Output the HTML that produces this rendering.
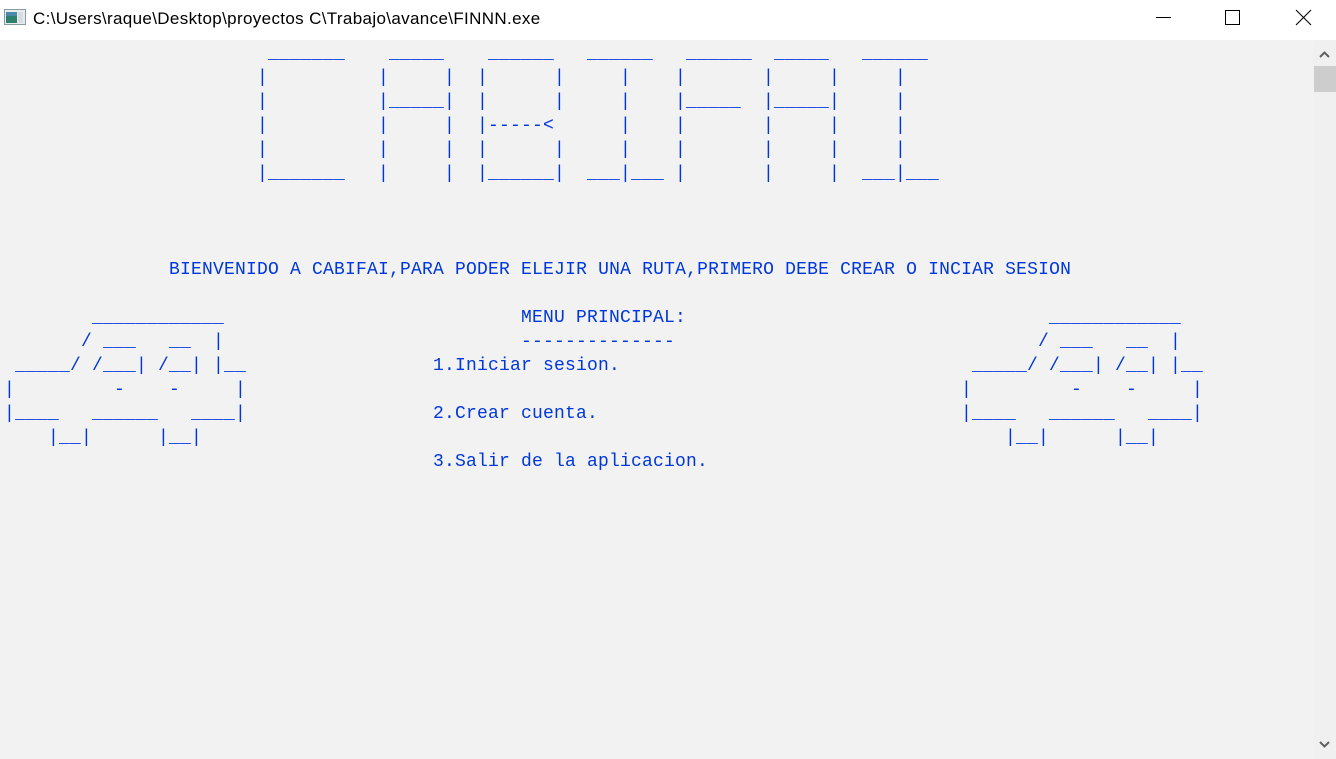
<!DOCTYPE html>
<html><head><meta charset="utf-8"><style>
html,body{margin:0;padding:0;}
body{width:1336px;height:759px;background:#f2f2f2;position:relative;overflow:hidden;}
#tb{position:absolute;left:0;top:0;width:1336px;height:40px;background:#fff;}
#title{position:absolute;left:33px;top:9px;font:17px "Liberation Sans",sans-serif;color:#000;white-space:nowrap;letter-spacing:0.35px;}
#con{position:absolute;left:0;top:42px;width:1313px;height:717px;}
.t{position:absolute;left:calc(4px + var(--c) * 11px);top:calc(var(--r) * 24px);height:24px;line-height:24px;font-family:"Liberation Mono",monospace;font-size:18px;letter-spacing:0.2px;color:#0037da;white-space:pre;}
#sb{position:absolute;left:1313px;top:40px;width:23px;height:719px;background:#f0f0f0;}
</style></head><body>
<div id="tb">
  <svg style="position:absolute;left:4px;top:9px" width="22" height="16" viewBox="0 0 22 16">
    <rect x="0.5" y="0.5" width="21" height="15" fill="#e8ecee" stroke="#8a9aa3"/>
    <rect x="2" y="3" width="11" height="11" fill="#2f7f6e"/>
    <rect x="2" y="3" width="11" height="4" fill="#4a8aa8"/>
    <rect x="14" y="3" width="5" height="11" fill="#d6dcdf"/>
  </svg>
  <div id="title">C:\Users\raque\Desktop\proyectos C\Trabajo\avance\FINNN.exe</div>
  <svg style="position:absolute;left:1150px;top:5px" width="180" height="30" viewBox="1150 5 180 30">
    <line x1="1156" y1="17.5" x2="1171" y2="17.5" stroke="#000" stroke-width="1"/>
    <rect x="1225.5" y="10.5" width="14" height="14" fill="none" stroke="#000" stroke-width="1"/>
    <line x1="1296" y1="10" x2="1311" y2="25" stroke="#000" stroke-width="1.1"/>
    <line x1="1311" y1="10" x2="1296" y2="25" stroke="#000" stroke-width="1.1"/>
  </svg>
</div>
<div id="con">
<span class="t" style="--c:24;--r:0">_______</span>
<span class="t" style="--c:35;--r:0">_____</span>
<span class="t" style="--c:44;--r:0">______</span>
<span class="t" style="--c:53;--r:0">______</span>
<span class="t" style="--c:62;--r:0">______</span>
<span class="t" style="--c:70;--r:0">_____</span>
<span class="t" style="--c:78;--r:0">______</span>
<span class="t" style="--c:23;--r:1">|</span><span class="t" style="--c:34;--r:1">|</span><span class="t" style="--c:40;--r:1">|</span><span class="t" style="--c:43;--r:1">|</span><span class="t" style="--c:50;--r:1">|</span><span class="t" style="--c:56;--r:1">|</span><span class="t" style="--c:61;--r:1">|</span><span class="t" style="--c:69;--r:1">|</span><span class="t" style="--c:75;--r:1">|</span><span class="t" style="--c:81;--r:1">|</span>
<span class="t" style="--c:23;--r:2">|</span><span class="t" style="--c:34;--r:2">|_____|</span><span class="t" style="--c:43;--r:2">|</span><span class="t" style="--c:50;--r:2">|</span><span class="t" style="--c:56;--r:2">|</span><span class="t" style="--c:61;--r:2">|_____</span><span class="t" style="--c:69;--r:2">|_____|</span><span class="t" style="--c:81;--r:2">|</span>
<span class="t" style="--c:23;--r:3">|</span><span class="t" style="--c:34;--r:3">|</span><span class="t" style="--c:40;--r:3">|</span><span class="t" style="--c:43;--r:3">|-----&lt;</span><span class="t" style="--c:56;--r:3">|</span><span class="t" style="--c:61;--r:3">|</span><span class="t" style="--c:69;--r:3">|</span><span class="t" style="--c:75;--r:3">|</span><span class="t" style="--c:81;--r:3">|</span>
<span class="t" style="--c:23;--r:4">|</span><span class="t" style="--c:34;--r:4">|</span><span class="t" style="--c:40;--r:4">|</span><span class="t" style="--c:43;--r:4">|</span><span class="t" style="--c:50;--r:4">|</span><span class="t" style="--c:56;--r:4">|</span><span class="t" style="--c:61;--r:4">|</span><span class="t" style="--c:69;--r:4">|</span><span class="t" style="--c:75;--r:4">|</span><span class="t" style="--c:81;--r:4">|</span>
<span class="t" style="--c:23;--r:5">|_______</span><span class="t" style="--c:34;--r:5">|</span><span class="t" style="--c:40;--r:5">|</span><span class="t" style="--c:43;--r:5">|______|</span><span class="t" style="--c:53;--r:5">___|___</span><span class="t" style="--c:61;--r:5">|</span><span class="t" style="--c:69;--r:5">|</span><span class="t" style="--c:75;--r:5">|</span><span class="t" style="--c:78;--r:5">___|___</span>

<span class="t" style="--c:15;--r:9">BIENVENIDO A CABIFAI,PARA PODER ELEJIR UNA RUTA,PRIMERO DEBE CREAR O INCIAR SESION</span>
<span class="t" style="--c:47;--r:11">MENU PRINCIPAL:</span>
<span class="t" style="--c:47;--r:12">--------------</span>
<span class="t" style="--c:39;--r:13">1.Iniciar sesion.</span>
<span class="t" style="--c:39;--r:15">2.Crear cuenta.</span>
<span class="t" style="--c:39;--r:17">3.Salir de la aplicacion.</span>

<span class="t" style="--c:0;--r:11">        ____________</span>
<span class="t" style="--c:0;--r:12">       / ___   __  |</span>
<span class="t" style="--c:0;--r:13"> _____/ /___| /__| |__</span>
<span class="t" style="--c:0;--r:14">|         -    -     |</span>
<span class="t" style="--c:0;--r:15">|____   ______   ____|</span>
<span class="t" style="--c:0;--r:16">    |__|      |__|</span>
<span class="t" style="--c:87;--r:11">        ____________</span>
<span class="t" style="--c:87;--r:12">       / ___   __  |</span>
<span class="t" style="--c:87;--r:13"> _____/ /___| /__| |__</span>
<span class="t" style="--c:87;--r:14">|         -    -     |</span>
<span class="t" style="--c:87;--r:15">|____   ______   ____|</span>
<span class="t" style="--c:87;--r:16">    |__|      |__|</span>
</div>
<div id="sb">
  <svg style="position:absolute;left:0;top:0" width="23" height="719" viewBox="0 0 23 719">
    <path d="M7 17 L11.5 12.5 L16 17" fill="none" stroke="#606060" stroke-width="2"/>
    <rect x="1" y="26" width="22" height="26" fill="#cdcdcd"/>
    <path d="M7 702 L11.5 706.5 L16 702" fill="none" stroke="#606060" stroke-width="2"/>
  </svg>
</div>
</body></html>
